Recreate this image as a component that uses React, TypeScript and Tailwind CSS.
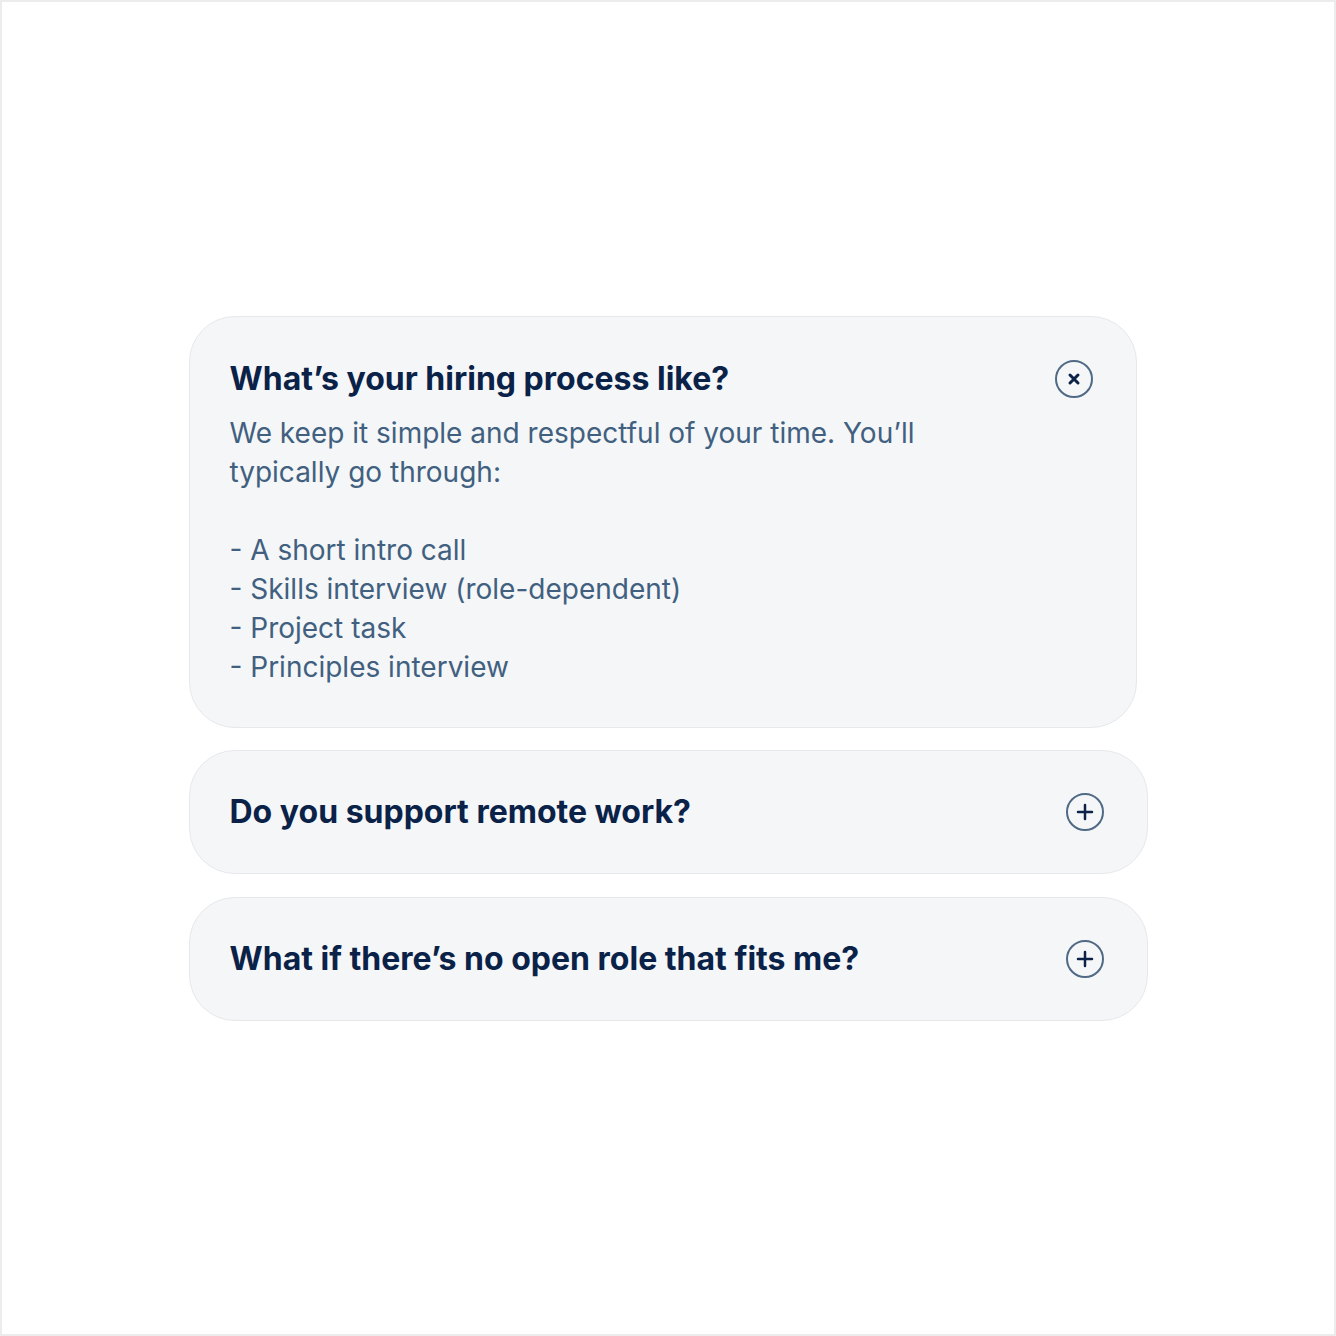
import { useState } from 'react';

interface Faq {
  id: string;
  question: string;
  answer: string;
}

const faqs: Faq[] = [
  {
    id: 'hiring',
    question: 'What’s your hiring process like?',
    answer:
      'We keep it simple and respectful of your time. You’ll typically go through:\n\n- A short intro call\n- Skills interview (role-dependent)\n- Project task\n- Principles interview',
  },
  {
    id: 'remote',
    question: 'Do you support remote work?',
    answer: 'Yes. Most of our team works remotely across several time zones.',
  },
  {
    id: 'no-role',
    question: 'What if there’s no open role that fits me?',
    answer: 'Send us a note anyway and tell us what you would love to work on.',
  },
];

function ToggleIcon({ open }: { open: boolean }) {
  return (
    <svg width="40" height="40" viewBox="0 0 40 40" fill="none" className="shrink-0">
      <circle cx="20" cy="20" r="18" stroke="#506a86" strokeWidth="2" />
      {open ? (
        <path
          d="M16 16L24 24M24 16L16 24"
          stroke="#0c2347"
          strokeWidth="3"
          strokeLinecap="round"
        />
      ) : (
        <path
          d="M20 13V27M13 20H27"
          stroke="#0c2347"
          strokeWidth="2.5"
          strokeLinecap="round"
        />
      )}
    </svg>
  );
}

export default function App() {
  const [openId, setOpenId] = useState<string | null>('hiring');

  return (
    <div className="flex h-[1336px] w-[1336px] items-center justify-center border-2 border-[#ececec] bg-white">
      <div className="flex w-[959px] flex-col items-start">
        {faqs.map((faq, i) => {
          const open = openId === faq.id;
          return (
            <div
              key={faq.id}
              className={`rounded-[46px] border border-[#e6e8ec] bg-[#f4f6f8] pl-[40px] pr-[42px] ${
                open ? 'w-[948px] pt-[40px] pb-[40px]' : 'w-[959px] pt-[39px] pb-[39px]'
              } ${i === 0 ? '' : i === 1 ? 'mt-[22px]' : 'mt-[23px]'}`}
            >
              <button
                type="button"
                onClick={() => setOpenId(open ? null : faq.id)}
                className="flex w-full items-center justify-between text-left"
              >
                <span className="font-['Inter',sans-serif] text-[32px] leading-[44px] font-bold text-[#0b2248]">
                  {faq.question}
                </span>
                <ToggleIcon open={open} />
              </button>
              {open && (
                <p className="mt-[13px] max-w-[760px] font-['Inter',sans-serif] text-[28px] leading-[39px] whitespace-pre-line text-[#41607f]">
                  {faq.answer}
                </p>
              )}
            </div>
          );
        })}
      </div>
    </div>
  );
}
